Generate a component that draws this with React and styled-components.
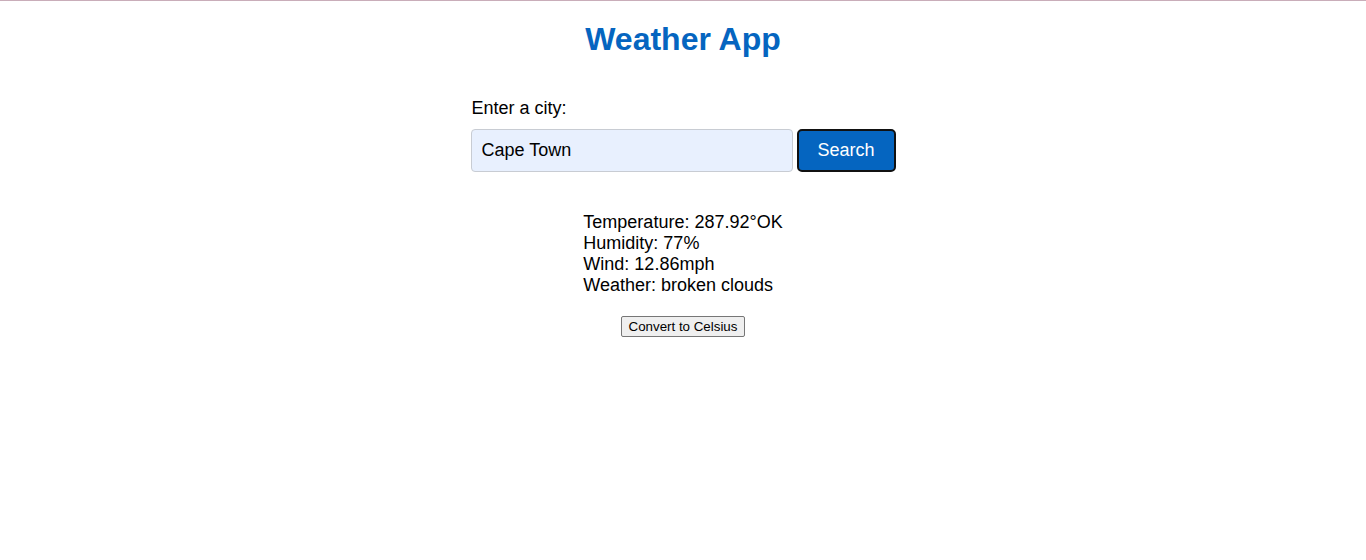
import React from "react";
import styled, { createGlobalStyle } from "styled-components";

const Global = createGlobalStyle`
  html, body {
    margin: 0;
    padding: 0;
    background: #ffffff;
  }
  body {
    border-top: 1px solid #c9adb9;
    font-family: "Liberation Sans", Arial, sans-serif;
    color: #000000;
  }
`;

const Page = styled.main`
  display: flex;
  flex-direction: column;
  align-items: center;
`;

const Title = styled.h1`
  margin: 20px 0 0;
  font-size: 32px;
  line-height: 37px;
  font-weight: 700;
  color: #0565c0;
`;

const Form = styled.form`
  width: 425px;
  margin-top: 40px;
  display: flex;
  flex-direction: column;
`;

const Label = styled.label`
  font-size: 18px;
  line-height: 21px;
  padding-left: 1px;
`;

const Row = styled.div`
  display: flex;
  gap: 4px;
  margin-top: 10px;
`;

const Input = styled.input`
  box-sizing: border-box;
  width: 322px;
  height: 43px;
  padding: 0 10px;
  font-family: "Liberation Sans", Arial, sans-serif;
  font-size: 18px;
  color: #000;
  background: #e8f0fe;
  border: 1px solid #c8ccd3;
  border-radius: 4px;
  outline: none;
`;

const SearchButton = styled.button`
  box-sizing: border-box;
  width: 99px;
  height: 43px;
  font-family: "Liberation Sans", Arial, sans-serif;
  font-size: 18px;
  color: #ffffff;
  background: #0565c0;
  border: 2px solid #111111;
  border-radius: 5px;
  cursor: pointer;
`;

const Info = styled.div`
  margin-top: 40px;
  font-size: 18px;
  line-height: 21px;
  text-align: left;
`;

const Line = styled.div``;

const ConvertButton = styled.button`
  margin-top: 20px;
  box-sizing: border-box;
  height: 21px;
  padding: 1px 7px;
  font-family: "Liberation Sans", Arial, sans-serif;
  font-size: 13.33px;
  color: #000;
  background: #efefef;
  border: 1px solid #767676;
  border-radius: 2px;
`;

export default function App() {
  return (
    <>
      <Global />
      <Page>
        <Title>Weather App</Title>
        <Form onSubmit={(e) => e.preventDefault()}>
          <Label htmlFor="city">Enter a city:</Label>
          <Row>
            <Input id="city" defaultValue="Cape Town" />
            <SearchButton type="submit">Search</SearchButton>
          </Row>
        </Form>
        <Info>
          <Line>Temperature: 287.92°OK</Line>
          <Line>Humidity: 77%</Line>
          <Line>Wind: 12.86mph</Line>
          <Line>Weather: broken clouds</Line>
        </Info>
        <ConvertButton type="button">Convert to Celsius</ConvertButton>
      </Page>
    </>
  );
}
